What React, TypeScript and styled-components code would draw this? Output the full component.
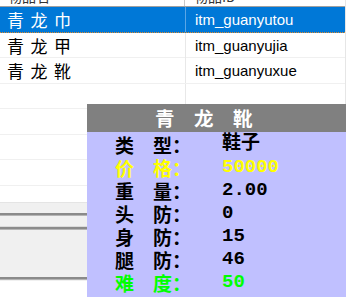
import React from "react";
import styled, { createGlobalStyle } from "styled-components";

const Global = createGlobalStyle`
  html, body { margin: 0; padding: 0; background: #ffffff; }
  body { font-family: "Liberation Sans", "Noto Sans CJK SC", sans-serif; }
`;

const Screen = styled.div`
  position: relative;
  width: 346px;
  height: 297px;
  overflow: hidden;
  background: #ffffff;
  display: flex;
  flex-direction: column;
`;

const ListArea = styled.div`
  height: 202px;
  overflow: hidden;
  display: flex;
  flex-direction: column;
  width: 345px;
  border-right: 1px solid #e6e6e6;
`;

const HeaderRow = styled.div`
  flex: none;
  display: grid;
  grid-template-columns: 185px 1fr;
  height: 22px;
  margin-top: -15px;
  background: #ffffff;
  border-bottom: 1px solid #a0a0a0;
  box-sizing: border-box;
`;

const HeaderCell = styled.div<{ $last?: boolean }>`
  display: flex;
  align-items: center;
  padding-left: ${(p) => (p.$last ? "9px" : "8px")};
  font-family: "Noto Sans CJK SC", sans-serif;
  font-size: 14px;
  color: #333;
  border-right: ${(p) => (p.$last ? "none" : "1px solid #c8c8c8")};
`;

const Row = styled.div<{ $selected?: boolean }>`
  flex: none;
  display: grid;
  grid-template-columns: 186px 1fr;
  height: 25.5px;
  box-sizing: border-box;
  background: ${(p) => (p.$selected ? "#0078d7" : "#ffffff")};
  border-bottom: ${(p) => (p.$selected ? "1px dotted #e08a2a" : "1px solid #f0f0f0")};
  color: ${(p) => (p.$selected ? "#ffffff" : "#000000")};
`;

const NameCell = styled.div<{ $selected?: boolean }>`
  display: flex;
  align-items: center;
  padding-left: 7px;
  font-family: "Noto Sans CJK SC", sans-serif;
  font-size: 17px;
  letter-spacing: 6.5px;
  border-right: 1px solid ${(p) => (p.$selected ? "#5aa6e6" : "#e8e8e8")};
`;

const IdCell = styled.div`
  display: flex;
  align-items: center;
  padding-left: 9px;
  font-family: "Liberation Sans", Arial, sans-serif;
  font-size: 15px;
`;

const Panel = styled.div`
  flex: none;
  height: 79px;
  background: #f0f0f0;
  display: flex;
  flex-direction: column;
  border-top: 1px solid #e4e4e4;
  box-sizing: border-box;
`;

const PanelStrip = styled.div<{ $h: number }>`
  height: ${(p) => p.$h}px;
  flex: none;
`;

const PanelRule = styled.div<{ $light?: boolean }>`
  flex: none;
  height: 2px;
  background: #8a8a8a;
  border-top: ${(p) => (p.$light ? "1px solid #dadada" : "none")};
  border-bottom: 1px solid #b4b4b4;
`;

const Tooltip = styled.div`
  position: absolute;
  left: 87px;
  top: 104px;
  width: 272px;
  height: 200px;
  background: #c0c0ff;
  display: flex;
  flex-direction: column;
`;

const TipTitle = styled.div`
  height: 28px;
  flex: none;
  background: #808080;
  color: #ffffff;
  font-family: "Noto Sans CJK SC", sans-serif;
  font-weight: 700;
  font-size: 19.5px;
  line-height: 28px;
  padding-left: 68px;
`;

const TipBody = styled.div`
  display: flex;
  flex-direction: column;
  padding-left: 28px;
  padding-top: 1px;
`;

const StatRow = styled.div<{ $color: string }>`
  display: grid;
  grid-template-columns: 107px 1fr;
  height: 23px;
  line-height: 23px;
  color: ${(p) => p.$color};
  font-weight: 700;
  font-size: 19px;
`;

const StatLabel = styled.span`
  font-family: "Noto Sans CJK SC", sans-serif;
`;

const StatValue = styled.span`
  font-family: "Liberation Mono", "Noto Sans CJK SC", monospace;
`;

const items = [
  { name: "青龙巾", id: "itm_guanyutou", selected: true },
  { name: "青龙甲", id: "itm_guanyujia" },
  { name: "青龙靴", id: "itm_guanyuxue" },
  { name: "", id: "" },
  { name: "", id: "" },
  { name: "", id: "" },
  { name: "", id: "" },
  { name: "", id: "" },
];

const stats = [
  { label: "类　型：", value: "鞋子", color: "#000000" },
  { label: "价　格：", value: "50000", color: "#ffff00" },
  { label: "重　量：", value: "2.00", color: "#000000" },
  { label: "头　防：", value: "0", color: "#000000" },
  { label: "身　防：", value: "15", color: "#000000" },
  { label: "腿　防：", value: "46", color: "#000000" },
  { label: "难　度：", value: "50", color: "#00ff00" },
];

export default function App() {
  return (
    <>
      <Global />
      <Screen>
        <ListArea>
          <HeaderRow>
            <HeaderCell>物品名</HeaderCell>
            <HeaderCell $last>物品ID</HeaderCell>
          </HeaderRow>
          {items.map((it, i) => (
            <Row key={i} $selected={it.selected}>
              <NameCell $selected={it.selected}>{it.name}</NameCell>
              <IdCell>{it.id}</IdCell>
            </Row>
          ))}
        </ListArea>
        <Panel>
          <PanelStrip $h={10} />
          <PanelRule />
          <PanelStrip $h={10} />
          <PanelRule $light />
          <PanelStrip $h={47} />
          <PanelRule />
        </Panel>
        <Tooltip>
          <TipTitle>青　龙　靴</TipTitle>
          <TipBody>
            {stats.map((s) => (
              <StatRow key={s.label} $color={s.color}>
                <StatLabel>{s.label}</StatLabel>
                <StatValue>{s.value}</StatValue>
              </StatRow>
            ))}
          </TipBody>
        </Tooltip>
      </Screen>
    </>
  );
}
